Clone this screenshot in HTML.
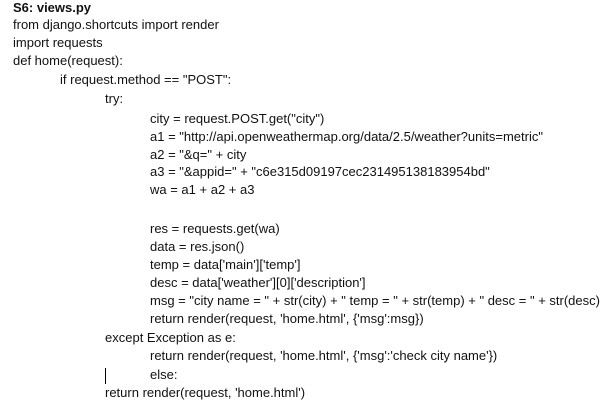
<!DOCTYPE html>
<html><head><meta charset="utf-8"><style>
body{margin:0;background:#fff;width:611px;height:411px;overflow:hidden;position:relative;font-family:"Liberation Sans",sans-serif;font-size:13px;color:#111;}
div.l{position:absolute;white-space:pre;line-height:16px;}
.cur{position:absolute;left:105px;top:368px;width:1px;height:16px;background:#000;}
</style></head><body>
<div class="l" style="left:13px;top:0px;font-weight:bold">S6: views.py</div>
<div class="l" style="left:13px;top:17px">from django.shortcuts import render</div>
<div class="l" style="left:13px;top:35px">import requests</div>
<div class="l" style="left:13px;top:53px">def home(request):</div>
<div class="l" style="left:60px;top:72px">if request.method == "POST":</div>
<div class="l" style="left:105px;top:91px">try:</div>
<div class="l" style="left:150px;top:111px">city = request.POST.get("city")</div>
<div class="l" style="left:150px;top:129px">a1 = "http://api.openweathermap.org/data/2.5/weather?units=metric"</div>
<div class="l" style="left:150px;top:147px">a2 = "&amp;q=" + city</div>
<div class="l" style="left:150px;top:164px">a3 = "&amp;appid=" + "c6e315d09197cec231495138183954bd"</div>
<div class="l" style="left:150px;top:182px">wa = a1 + a2 + a3</div>
<div class="l" style="left:150px;top:221px">res = requests.get(wa)</div>
<div class="l" style="left:150px;top:239px">data = res.json()</div>
<div class="l" style="left:150px;top:257px">temp = data['main']['temp']</div>
<div class="l" style="left:150px;top:275px">desc = data['weather'][0]['description']</div>
<div class="l" style="left:150px;top:293px">msg = "city name = " + str(city) + " temp = " + str(temp) + " desc = " + str(desc)</div>
<div class="l" style="left:150px;top:311px">return render(request, 'home.html', {'msg':msg})</div>
<div class="l" style="left:105px;top:330px">except Exception as e:</div>
<div class="l" style="left:150px;top:348px">return render(request, 'home.html', {'msg':'check city name'})</div>
<div class="cur"></div>
<div class="l" style="left:150px;top:367px">else:</div>
<div class="l" style="left:105px;top:385px">return render(request, 'home.html')</div>
</body></html>
